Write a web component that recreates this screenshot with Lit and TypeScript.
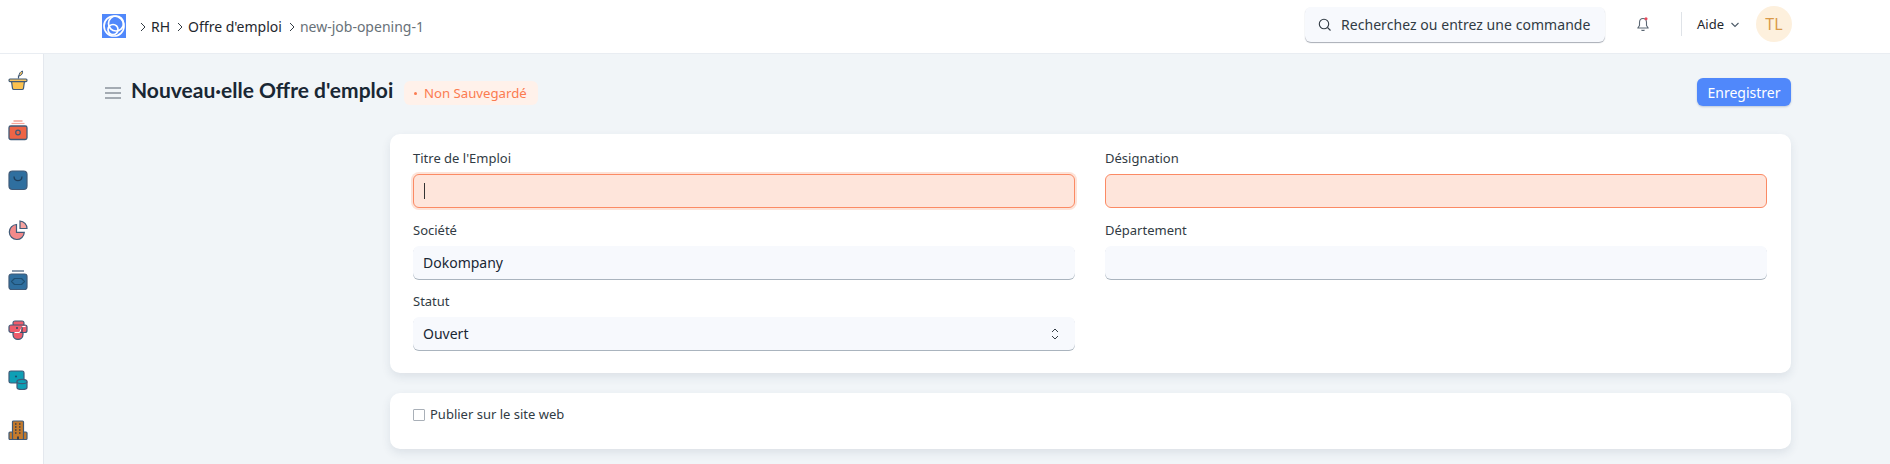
import { LitElement, html, css, svg } from "lit";
import { customElement } from "lit/decorators.js";

const S = "#3f5a78";
const icons = [
  svg`<path d="M10.500 8.500V5.500" stroke="${S}" stroke-width="1.200" fill="none"/><path d="M11 6c0-2.500 1.500-4.500 3.500-5 .5 2.500-1 4.500-3.500 5z" fill="#f7c35f" stroke="${S}" stroke-width="1"/><path d="M3.500 11h13l-1 7.300a1.500 1.500 0 0 1-1.500 1.200H6a1.500 1.500 0 0 1-1.500-1.200z" fill="#fbc14f" stroke="${S}" stroke-width="1.200"/><rect x="1" y="9" width="18" height="2.600" rx="1" fill="#f7c35f" stroke="${S}" stroke-width="1.100"/>`,
  svg`<path d="M5.500 1h9" stroke="#f08a7a" stroke-width="1.200"/><path d="M3.500 3.500h13" stroke="#f5a79b" stroke-width="1.200"/><rect x="1" y="6" width="18" height="13.500" rx="1.800" fill="#ee6446" stroke="${S}" stroke-width="1.300"/><circle cx="10" cy="12.500" r="2.300" fill="#ee6446" stroke="${S}" stroke-width="1.200"/>`,
  svg`<rect x="1" y="1" width="18" height="18.500" rx="3.500" fill="#2f6f9f" stroke="${S}" stroke-width="1.200"/><path d="M6 6.500c.3 5.500 7.700 5.500 8 0" fill="none" stroke="#1f3f5c" stroke-width="1.300"/>`,
  svg`<path d="M8.500 4.500a7.500 7.500 0 1 0 7.800 7.800H8.500z" fill="#f28a8a" stroke="${S}" stroke-width="1.200"/><path d="M12 1a7.500 7.500 0 0 1 7 7.500h-7z" fill="#f7a3a0" stroke="${S}" stroke-width="1.200"/>`,
  svg`<path d="M4 1h12" stroke="${S}" stroke-width="1.200"/><rect x="1" y="4" width="18" height="15.500" rx="2.500" fill="#2f6f9f" stroke="${S}" stroke-width="1.200"/><path d="M6.500 8.500h7l3 3-3 3h-7l-3-3z" fill="#2f6f9f" stroke="#1f4f72" stroke-width="1.200" stroke-linejoin="round"/>`,
  svg`<rect x="5" y="1" width="11" height="5" rx="2" fill="#ef5d6c" stroke="${S}" stroke-width="1.100"/><path d="M5 12h10v2.500c0 2.800-2.200 4.800-5 4.800s-5-2-5-4.800z" fill="#ef5d6c" stroke="${S}" stroke-width="1.200"/><rect x="1" y="5" width="18" height="7.500" rx="2" fill="#ef5d6c" stroke="${S}" stroke-width="1.200"/><circle cx="9" cy="8" r="1" fill="#2c4560"/><path d="M6.500 12.500h5l3-6h3" fill="none" stroke="#fff" stroke-width="1"/><path d="M14 7v6" stroke="#2c4560" stroke-width="1.200"/>`,
  svg`<rect x="1" y="1" width="15" height="12" rx="1.800" fill="#0e9fb5" stroke="${S}" stroke-width="1.200"/><circle cx="8" cy="6.500" r="1.100" fill="#1f4f72"/><path d="M9 11.500v6a5 2 0 0 0 10 0v-6" fill="#0e9fb5" stroke="${S}" stroke-width="1.200"/><ellipse cx="14" cy="11.500" rx="5" ry="2.200" fill="#0e9fb5" stroke="${S}" stroke-width="1.200"/>`,
  svg`<rect x="1" y="12" width="18" height="7.500" rx="1" fill="#c47a2c" stroke="${S}" stroke-width="1.200"/><rect x="4.500" y="1" width="11" height="18.500" rx="1" fill="#c47a2c" stroke="${S}" stroke-width="1.200"/><path d="M7 4h1.500M11 4h1.500M7 7h1.500M11 7h1.500M7 10h1.500M11 10h1.500M7 13h1.500M11 13h1.500" stroke="#3a3f4a" stroke-width="1.300"/><path d="M9 19.500v-3h2v3" fill="#3a3f4a"/>`,
];

const chevron = html`<svg viewBox="0 0 10 10"><path d="M3 1l4 4-4 4" fill="none" stroke="#333c44" stroke-width="1" /></svg>`;

@customElement("app-root")
export class AppRoot extends LitElement {
  static styles = css`
    :host {
      display: block;
      height: 464px;
      overflow: hidden;
      background: #f1f5f8;
      font-family: "Noto Sans", "Open Sans", sans-serif;
      color: #192734;
    }
    .top {
      height: 53px;
      background: #fff;
      border-bottom: 1px solid #e9edf2;
      display: flex;
      align-items: center;
      padding-left: 102px;
    }
    .logo { width: 24px; height: 24px; display: block; margin-top: -1px; }
    .crumbs {
      display: flex;
      align-items: center;
      margin-left: 10px;
      font-size: 14px;
      color: #1f272e;
    }
    .crumbs svg { width: 10px; height: 10px; margin: 1px 3px 0 2px; }
    .crumbs .c { margin-right: 3px; }
    .crumbs .last { color: #687178; }
    .right { margin-left: auto; display: flex; align-items: center; height: 100%; }
    .search {
      width: 300px;
      height: 35px;
      box-sizing: border-box;
      background: #f7f9fd;
      border-radius: 6px;
      box-shadow: 0 1px 1px rgba(60, 70, 90, 0.45);
      display: flex;
      align-items: center;
      padding-left: 13px;
      font-size: 14px;
      color: #313b44;
      white-space: nowrap;
      margin-top: -5px;
    }
    .search span { letter-spacing: 0.05px; }
    .search svg { width: 13px; height: 13px; margin-right: 10px; flex: none; }
    .bell { width: 14px; height: 16px; margin-left: 31px; margin-top: -5px; }
    .divider { width: 1px; height: 24px; background: #dfe3e8; margin-left: 31px; margin-top: -5px; }
    .aide { font-size: 13px; color: #1f272e; margin-left: 15px; margin-top: -5px; display: flex; align-items: center; }
    .aide svg { width: 10px; height: 8px; margin-left: 6px; margin-top: 1px; }
    .avatar {
      width: 36px;
      height: 36px;
      border-radius: 50%;
      background: #fdf0dd;
      color: #d99a4a;
      font-size: 16px;
      display: flex;
      align-items: center;
      justify-content: center;
      margin-left: 16px;
      margin-right: 98px;
      margin-top: -5px;
    }
    .body { display: flex; height: 410px; }
    .side {
      width: 44px;
      flex: none;
      background: #fff;
      border-right: 1px solid #e4e8ee;
      box-sizing: border-box;
      display: flex;
      flex-direction: column;
      gap: 29px;
      padding: 16px 0 0 8px;
    }
    .side svg { width: 20px; height: 21px; display: block; }
    .main { flex: 1; padding-left: 61px; padding-right: 99px; }
    .head {
      display: flex;
      align-items: center;
      height: 28px;
      margin-top: 24px;
    }
    .burger { width: 16px; height: 12px; margin-right: 10px; margin-top: 1px; }
    h1 {
      margin: -5px 0 0;
      font-family: "Lato", "Noto Sans", sans-serif;
      font-size: 21px;
      font-weight: 700;
      color: #192734;
      white-space: nowrap;
      width: 273px;
    }
    .badge {
      height: 24px;
      box-sizing: border-box;
      background: #fff1ea;
      border-radius: 6px;
      padding: 0 11px 0 10px;
      color: #fb7b50;
      font-size: 13.2px;
      display: flex;
      align-items: center;
      margin-top: 1px;
    }
    .dot { width: 3px; height: 3px; border-radius: 50%; background: #fb7b50; margin-right: 7px; margin-top: 2px; }
    .save {
      margin-left: auto;
      width: 94px;
      height: 28px;
      border: 0;
      border-radius: 6px;
      background: #5088fb;
      color: #fff;
      font: 14px "Noto Sans", sans-serif;
      padding: 0;
      box-shadow: 0 1px 2px rgba(40, 70, 130, 0.25);
    }
    .cards { margin-left: 285px; margin-top: 28px; display: flex; flex-direction: column; gap: 20px; }
    .card {
      background: #fff;
      border-radius: 10px;
      box-shadow: 0 4px 10px rgba(40, 60, 90, 0.1);
    }
    .form {
      height: 239px;
      box-sizing: border-box;
      padding: 15px 24px 0 23px;
      display: grid;
      grid-template-columns: 662px 662px;
      grid-template-rows: 72px 71px 66px;
      column-gap: 30px;
    }
    label { display: block; font-size: 13px; color: #313b44; height: 25px; line-height: 18px; }
    .input {
      height: 33px;
      box-sizing: border-box;
      background: #f7f9fd;
      border-radius: 6px;
      box-shadow: 0 1px 0 #aab4be;
      display: flex;
      align-items: center;
      padding: 0 10px;
      font-size: 14px;
      color: #192734;
    }
    .input.err {
      height: 34px;
      background: #fee5db;
      border: 1px solid #fb8a64;
      box-shadow: none;
    }
    .input.focus { box-shadow: 0 0 0 2px #fde3d8; }
    .caret { width: 1px; height: 16px; background: #333; }
    .chev { margin-left: auto; width: 8px; height: 14px; margin-right: 6px; }
    .check {
      height: 56px;
      box-sizing: border-box;
      padding: 12px 23px 0;
      display: flex;
      align-items: flex-start;
      font-size: 13px;
      color: #313b44;
      line-height: 18px;
    }
    .box {
      width: 12px;
      height: 12px;
      box-sizing: border-box;
      border: 1px solid #a9b0b8;
      border-radius: 1px;
      background: #fff;
      margin: 4px 5px 0 0;
    }
  `;

  render() {
    return html`
      <div class="top">
        <svg class="logo" viewBox="0 0 24 24">
          <rect width="24" height="24" fill="#5088fb" />
          <g fill="none" stroke="#fff" stroke-width="1.700">
            <circle cx="12" cy="12" r="10" />
            <circle cx="14" cy="9.500" r="7.500" />
            <circle cx="11" cy="15.500" r="5" />
          </g>
        </svg>
        <div class="crumbs">
          ${chevron}<span class="c">RH</span>
          ${chevron}<span class="c">Offre d'emploi</span>
          ${chevron}<span class="last">new-job-opening-1</span>
        </div>
        <div class="right">
          <div class="search">
            <svg viewBox="0 0 13 13"><circle cx="6" cy="6" r="4.700" fill="none" stroke="#313b44" stroke-width="1.100" /><path d="M9.500 9.500l3 3" stroke="#313b44" stroke-width="1.100" /></svg>
            <span>Recherchez ou entrez une commande</span>
          </div>
          <svg class="bell" viewBox="0 0 14 16">
            <path d="M7 2.500c-2.400 0-3.500 1.800-3.500 4v3L1.800 12h10.400l-1.700-2.500v-3c0-2.200-1.100-4-3.500-4z" fill="none" stroke="#5a6672" stroke-width="1.100" stroke-linejoin="round" />
            <path d="M5.500 13.800c.8.900 2.200.9 3 0" fill="none" stroke="#5a6672" stroke-width="1.100" />
            <circle cx="10" cy="2.800" r="1.500" fill="#e8485a" />
          </svg>
          <div class="divider"></div>
          <div class="aide">
            Aide
            <svg viewBox="0 0 10 8"><path d="M1.500 2l3.500 3.500L8.500 2" fill="none" stroke="#4c5a67" stroke-width="1.100" /></svg>
          </div>
          <div class="avatar">TL</div>
        </div>
      </div>
      <div class="body">
        <div class="side">
          ${icons.map((i) => html`<svg viewBox="0 0 20 21">${i}</svg>`)}
        </div>
        <div class="main">
          <div class="head">
            <svg class="burger" viewBox="0 0 16 12"><path d="M0 1h16M0 6h16M0 11h16" stroke="#8a939c" stroke-width="1.300" /></svg>
            <h1>Nouveau·elle Offre d'emploi</h1>
            <div class="badge"><span class="dot"></span>Non Sauvegardé</div>
            <button class="save">Enregistrer</button>
          </div>
          <div class="cards">
            <div class="card form">
              <div>
                <label>Titre de l'Emploi</label>
                <div class="input err focus"><span class="caret"></span></div>
              </div>
              <div>
                <label>Désignation</label>
                <div class="input err"></div>
              </div>
              <div>
                <label>Société</label>
                <div class="input">Dokompany</div>
              </div>
              <div>
                <label>Département</label>
                <div class="input"></div>
              </div>
              <div>
                <label>Statut</label>
                <div class="input">
                  Ouvert
                  <svg class="chev" viewBox="0 0 8 14"><path d="M1 5l3-3 3 3M1 9l3 3 3-3" fill="none" stroke="#333c44" stroke-width="1" /></svg>
                </div>
              </div>
            </div>
            <div class="card check">
              <span class="box"></span>Publier sur le site web
            </div>
          </div>
        </div>
      </div>
    `;
  }
}
